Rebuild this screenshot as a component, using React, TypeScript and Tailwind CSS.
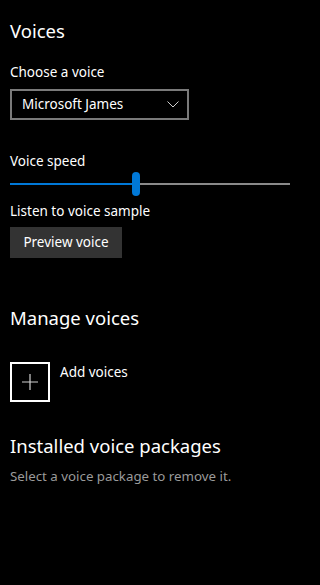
export default function App() {
  return (
    <div
      className="min-h-[585px] w-full bg-black text-white"
      style={{ fontFamily: '"Noto Sans", "Open Sans", sans-serif' }}
    >
      <div className="flex flex-col px-[10px] pt-[17px]">
        <h1 className="text-[18.5px] leading-[28px]">Voices</h1>

        {/* Voice picker */}
        <div className="mt-[17px] text-[13.5px] leading-[20px]">Choose a voice</div>
        <button className="mt-[7px] flex h-[31px] w-[179px] items-center justify-between border-2 border-[#7a7a7a] pl-[10px] pr-[8px] text-[13.5px]">
          <span>Microsoft James</span>
          <svg width="12" height="7" viewBox="0 0 12 7" fill="none" stroke="#cfcfcf" strokeWidth="1">
            <path d="M0.5 0.5L6 6L11.5 0.5" />
          </svg>
        </button>

        {/* Speed slider */}
        <div className="mt-[31px] text-[13.5px] leading-[20px]">Voice speed</div>
        <div className="relative mt-[1px] flex h-[24px] w-[280px] items-center">
          <div className="h-[2px] w-[125px] bg-[#0078d7]" />
          <div className="h-[2px] flex-1 bg-[#8a8a8a]" />
          <div className="absolute left-[122px] top-0 h-[24px] w-[8px] rounded-full bg-[#0078d7]" />
        </div>

        <div className="mt-[5px] text-[13.5px] leading-[20px]">Listen to voice sample</div>
        <button className="mt-[6px] flex h-[31px] w-[112px] items-center justify-center bg-[#333333] text-[13.5px]">
          Preview voice
        </button>

        {/* Manage voices */}
        <h2 className="mt-[46px] text-[18.5px] leading-[28px]">Manage voices</h2>
        <div className="mt-[30px] flex items-start gap-[10px]">
          <div className="flex size-[40px] items-center justify-center border-2 border-white">
            <svg width="16" height="16" viewBox="0 0 16 16" fill="none" stroke="#d0d0d0" strokeWidth="1.2">
              <path d="M8 0v16M0 8h16" />
            </svg>
          </div>
          <span className="text-[13.5px] leading-[20px]">Add voices</span>
        </div>

        <h2 className="mt-[30px] text-[18.5px] leading-[28px]">Installed voice packages</h2>
        <div className="mt-[6px] text-[13.3px] leading-[20px] text-[#9a9a9a]">
          Select a voice package to remove it.
        </div>
      </div>
    </div>
  );
}
